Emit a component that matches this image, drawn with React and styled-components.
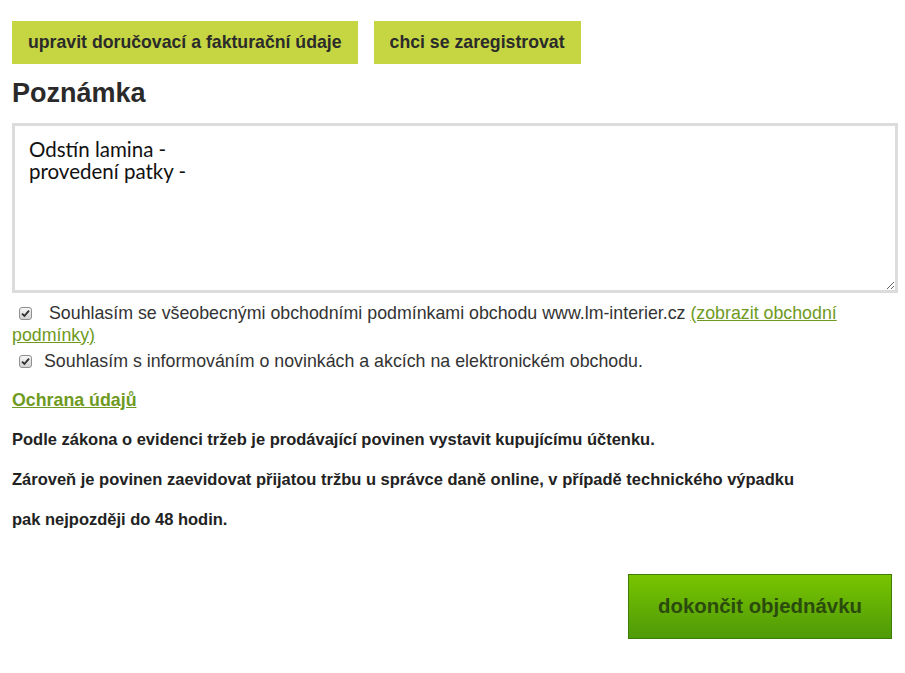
import React from "react";
import styled, { createGlobalStyle } from "styled-components";

const GlobalStyle = createGlobalStyle`
  body {
    margin: 0;
    background: #fff;
    font-family: "Liberation Sans", Arial, sans-serif;
    color: #333;
  }
`;

const Page = styled.div`
  padding: 21px 7px 0 12px;
`;

const ButtonRow = styled.div`
  display: flex;
  gap: 16px;
`;

const LimeButton = styled.button`
  height: 43px;
  padding: 0 16px;
  border: none;
  background: #c5d642;
  color: #2b2b2b;
  font-family: "Liberation Sans", Arial, sans-serif;
  font-weight: bold;
  font-size: 17.7px;
  cursor: pointer;
`;

const Title = styled.h2`
  margin: 14px 0 15px;
  font-size: 27px;
  line-height: 30px;
  color: #2a2a2a;
`;

const Note = styled.textarea`
  display: block;
  box-sizing: border-box;
  width: 100%;
  height: 170px;
  margin: 0;
  padding: 12px 14px;
  border: 3px solid #dcdcdc;
  font-family: Lato, "Open Sans", sans-serif;
  font-size: 20.5px;
  line-height: 22px;
  color: #111;
  resize: vertical;
  outline: none;
`;

const Agree = styled.label`
  display: block;
  margin-top: ${(p) => p.$top}px;
  font-size: 17.8px;
  line-height: 22px;
  color: #333;
`;

const Box = styled.span`
  display: inline-block;
  box-sizing: border-box;
  width: 13px;
  height: 13px;
  margin: 0 ${(p) => p.$gap}px 0 7px;
  vertical-align: -1px;
  border: 1px solid #8f8f8f;
  border-radius: 3px;
  background: linear-gradient(#f6f6f6, #d2d2d2);
  position: relative;

  svg {
    position: absolute;
    left: 1px;
    top: 1px;
  }
`;

const GreenLink = styled.a`
  color: #6e9a22;
  text-decoration: underline;
  font-weight: ${(p) => (p.$bold ? "bold" : "normal")};
`;

const Protect = styled.div`
  margin-top: 17px;
  font-size: 17.8px;
  line-height: 22px;
`;

const Info = styled.p`
  margin: 18px 0 0;
  font-size: 16.5px;
  font-weight: bold;
  line-height: 20px;
  color: #222;

  & + & {
    margin-top: ${(p) => p.$top}px;
  }
`;

const Footer = styled.div`
  display: flex;
  justify-content: flex-end;
  padding: 45px 6px 0 0;
`;

const FinishButton = styled.button`
  width: 264px;
  height: 65px;
  border: 1px solid #3f7d06;
  background: linear-gradient(#78c400, #4f9a08);
  color: #2b4a0e;
  font-family: "Liberation Sans", Arial, sans-serif;
  font-weight: bold;
  font-size: 20.4px;
  cursor: pointer;
`;

const Check = ({ gap }) => (
  <Box $gap={gap}>
    <svg width="9" height="9" viewBox="0 0 9 9">
      <path d="M1 4.6 L3.4 7 L8 1.6" fill="none" stroke="#2e2e2e" strokeWidth="1.8" />
    </svg>
  </Box>
);

export default function App() {
  return (
    <Page>
      <GlobalStyle />
      <ButtonRow>
        <LimeButton>upravit doručovací a fakturační údaje</LimeButton>
        <LimeButton>chci se zaregistrovat</LimeButton>
      </ButtonRow>
      <Title>Poznámka</Title>
      <Note defaultValue={"Odstín lamina -\nprovedení patky -"} />
      <Agree $top={9}>
        <Check gap={17} />
        Souhlasím se všeobecnými obchodními podmínkami obchodu www.lm-interier.cz{" "}
        <GreenLink href="#">(zobrazit obchodní podmínky)</GreenLink>
      </Agree>
      <Agree $top={4}>
        <Check gap={12} />
        Souhlasím s informováním o novinkách a akcích na elektronickém obchodu.
      </Agree>
      <Protect>
        <GreenLink href="#" $bold>
          Ochrana údajů
        </GreenLink>
      </Protect>
      <Info>Podle zákona o evidenci tržeb je prodávající povinen vystavit kupujícímu účtenku.</Info>
      <Info $top={19}>
        Zároveň je povinen zaevidovat přijatou tržbu u správce daně online, v případě technického výpadku
      </Info>
      <Info $top={20}>pak nejpozději do 48 hodin.</Info>
      <Footer>
        <FinishButton>dokončit objednávku</FinishButton>
      </Footer>
    </Page>
  );
}
